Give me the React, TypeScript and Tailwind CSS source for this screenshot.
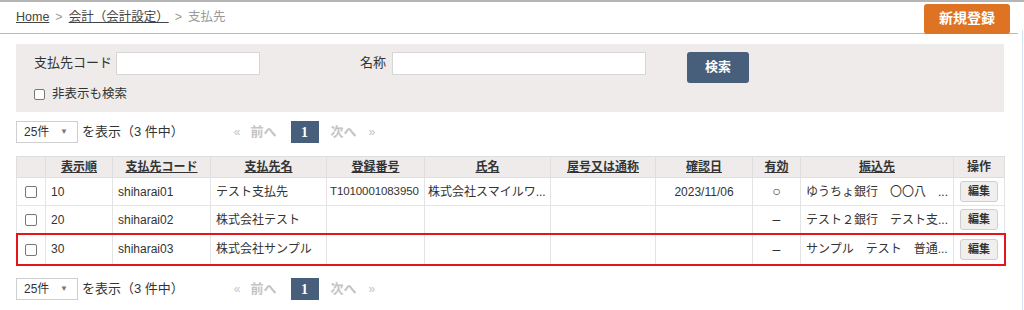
import React from 'react';

type Row = {
  order: string;
  code: string;
  name: string;
  regNo: string;
  person: string;
  trade: string;
  checked: string;
  valid: string;
  bank: string;
};

const rows: Row[] = [
  { order: '10', code: 'shiharai01', name: 'テスト支払先', regNo: 'T1010001083950', person: '株式会社スマイルワ...', trade: '', checked: '2023/11/06', valid: '○', bank: 'ゆうちょ銀行　〇〇八　...' },
  { order: '20', code: 'shiharai02', name: '株式会社テスト', regNo: '', person: '', trade: '', checked: '', valid: '–', bank: 'テスト２銀行　テスト支...' },
  { order: '30', code: 'shiharai03', name: '株式会社サンプル', regNo: '', person: '', trade: '', checked: '', valid: '–', bank: 'サンプル　テスト　普通...' },
];

const headers = ['', '表示順', '支払先コード', '支払先名', '登録番号', '氏名', '屋号又は通称', '確認日', '有効', '振込先', '操作'];
const widths = [29, 67, 98, 116, 98, 126, 105, 97, 48, 153, 51];

function Pager() {
  return (
    <div className="flex items-center h-[22px]">
      <div className="flex items-center justify-between w-[62px] h-[22px] border border-[#cfcfcf] bg-white pl-[7px] pr-[9px] text-[12px]">
        <span>25件</span>
        <span className="text-[8px] text-[#777]">▼</span>
      </div>
      <span className="ml-[4px] text-[13px]">を表示（3 件中）</span>
      <div className="flex items-center ml-[50px] text-[13px] text-[#c4c4c4]">
        <span className="text-[12px]">«</span>
        <span className="ml-[10px] font-bold">前へ</span>
        <span className="ml-[14px] w-[28px] h-[22px] bg-[#475f7a] text-white font-bold flex items-center justify-center font-['Liberation_Serif',serif] text-[14px]">1</span>
        <span className="ml-[12px] font-bold">次へ</span>
        <span className="ml-[12px] text-[12px]">»</span>
      </div>
    </div>
  );
}

export default function App() {
  return (
    <div className="w-[1024px] h-[310px] bg-white text-[#333] font-['Liberation_Sans','Noto_Sans_CJK_JP',sans-serif] overflow-hidden relative">
      <div className="border-t-2 border-[#b5b5b5]" />
      {/* header */}
      <div className="flex items-center justify-between h-[32px] border-b border-[#b9b9b9] mr-[6px] pl-[16px] pr-[8px]">
        <div className="flex items-center text-[12.5px] gap-[6px]">
          <a className="underline text-[#444]">Home</a>
          <span className="text-[#999]">&gt;</span>
          <a className="underline text-[#444]">会計（会計設定）</a>
          <span className="text-[#999]">&gt;</span>
          <span className="text-[#999]">支払先</span>
        </div>
        <button className="w-[86px] h-[30px] mt-[2px] rounded-[3px] bg-[#df7324] text-white font-bold text-[14px]">新規登録</button>
      </div>

      {/* search */}
      <div className="mx-[16px] mt-[10px] w-[988px] h-[68px] bg-[#eeebea] pt-[8px] pl-[18px]">
        <div className="flex items-center h-[22px] text-[13px]">
          <span>支払先コード</span>
          <input className="ml-[4px] w-[144px] h-[23px] bg-white border border-[#d6d6d6]" />
          <span className="ml-[100px]">名称</span>
          <input className="ml-[6px] w-[254px] h-[23px] bg-white border border-[#d6d6d6]" />
          <button className="ml-[41px] mt-[8px] w-[62px] h-[31px] rounded-[3px] bg-[#475f7a] text-white font-bold text-[13px]">検索</button>
        </div>
        <label className="flex items-center mt-[11px] text-[12.5px]">
          <span className="w-[11px] h-[11px] border border-[#777] rounded-[2px] bg-white" />
          <span className="ml-[7px]">非表示も検索</span>
        </label>
      </div>

      <div className="pl-[16px] mt-[9px]">
        <Pager />
      </div>

      {/* table */}
      <div className="mx-[16px] mt-[13px] w-[988px]">
        <table className="table-fixed border-collapse w-[988px] text-[12px]">
          <colgroup>
            {widths.map((w, i) => (
              <col key={i} style={{ width: w }} />
            ))}
          </colgroup>
          <thead>
            <tr className="h-[21px] bg-[#eeebea]">
              {headers.map((h, i) => (
                <th key={i} className="border border-[#dedede] font-bold text-center px-[4px]">
                  <span className={i > 0 && i < 10 ? 'underline' : ''}>{h}</span>
                </th>
              ))}
            </tr>
          </thead>
          <tbody>
            {rows.map((r, i) => (
              <tr key={i} className={i === 2 ? 'h-[31px] outline-2 outline-[#e8141b] -outline-offset-1' : 'h-[28px]'}>
                <td className="border border-[#e4e4e4] text-center">
                  <span className="inline-block w-[12px] h-[12px] border border-[#777] rounded-[2px] align-middle" />
                </td>
                <td className="border border-[#e4e4e4] px-[5px]">{r.order}</td>
                <td className="border border-[#e4e4e4] px-[5px]">{r.code}</td>
                <td className="border border-[#e4e4e4] px-[5px] whitespace-nowrap">{r.name}</td>
                <td className="border border-[#e4e4e4] px-[3px] whitespace-nowrap text-[11.5px] tracking-[-0.1px]">{r.regNo}</td>
                <td className="border border-[#e4e4e4] px-[3px] whitespace-nowrap">{r.person}</td>
                <td className="border border-[#e4e4e4] px-[4px]">{r.trade}</td>
                <td className="border border-[#e4e4e4] px-[4px] text-center">{r.checked}</td>
                <td className="border border-[#e4e4e4] text-center text-[14px]">{r.valid}</td>
                <td className="border border-[#e4e4e4] px-[5px] whitespace-nowrap">{r.bank}</td>
                <td className="border border-[#e4e4e4] text-center">
                  <button className="w-[38px] h-[21px] rounded-[3px] border border-[#cfcfcf] bg-[#f1efee] text-[11px] font-bold">編集</button>
                </td>
              </tr>
            ))}
          </tbody>
        </table>
      </div>

      <div className="pl-[16px] mt-[13px]">
        <Pager />
      </div>

      <div className="absolute top-[30px] right-[1px] w-[1px] h-[280px] bg-[#d5e3f0]" />
    </div>
  );
}
